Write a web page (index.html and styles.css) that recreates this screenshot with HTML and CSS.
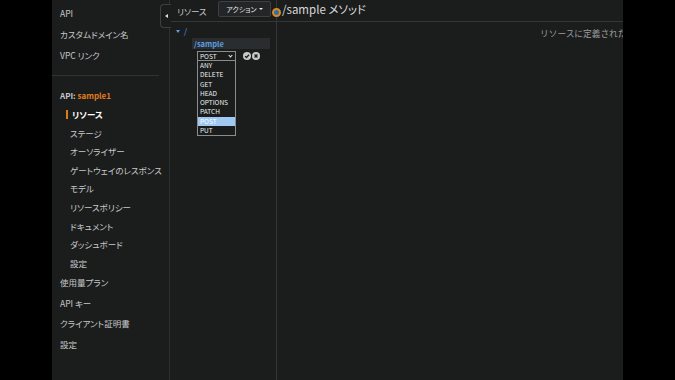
FILE: index.html
```html
<!DOCTYPE html>
<html lang="ja">

<head>
    <meta charset="UTF-8">
    <meta name="viewport" content="width=device-width, initial-scale=1.0">
    <title>API Gateway リソース</title>
    <link rel="stylesheet" href="styles.css">
</head>

<body>
    <div class="screen">
        <!-- 左のナビゲーション -->
        <ul class="nav">
            <li class="top">API</li>
            <li class="top">カスタムドメイン名</li>
            <li class="top">VPC リンク</li>
            <li class="divider"></li>
            <li class="api-name">API: <span>sample1</span></li>
            <li class="sub active">リソース</li>
            <li class="sub">ステージ</li>
            <li class="sub">オーソライザー</li>
            <li class="sub">ゲートウェイのレスポンス</li>
            <li class="sub">モデル</li>
            <li class="sub">リソースポリシー</li>
            <li class="sub">ドキュメント</li>
            <li class="sub">ダッシュボード</li>
            <li class="sub">設定</li>
            <li class="top2">使用量プラン</li>
            <li class="top2">API キー</li>
            <li class="top2">クライアント証明書</li>
            <li class="top2">設定</li>
        </ul>

        <div class="resources">
            <div class="collapse"><span></span></div>
            <div class="res-head">
                <span class="res-title">リソース</span>
                <button class="action">アクション<i></i></button>
            </div>
            <div class="tree">
                <div class="root"><i></i>/</div>
                <div class="node">/sample</div>
                <div class="method-row">
                    <div class="select">POST<i></i></div>
                    <span class="circle ok">
                        <svg viewBox="0 0 10 10" width="8" height="8"><path d="M2.6 5.2 L4.3 6.9 L7.5 3.4" fill="none" stroke="#1b1d1d" stroke-width="1.6"/></svg>
                    </span>
                    <span class="circle ng">
                        <svg viewBox="0 0 10 10" width="8" height="8"><path d="M3.2 3.2 L6.8 6.8 M6.8 3.2 L3.2 6.8" fill="none" stroke="#1b1d1d" stroke-width="1.6"/></svg>
                    </span>
                </div>
                <ul class="options">
                    <li>ANY</li>
                    <li>DELETE</li>
                    <li>GET</li>
                    <li>HEAD</li>
                    <li>OPTIONS</li>
                    <li>PATCH</li>
                    <li class="selected">POST</li>
                    <li>PUT</li>
                </ul>
            </div>
        </div>

        <div class="main">
            <span class="dot"></span>
            <div class="main-head">/sample メソッド</div>
            <div class="main-body">リソースに定義されたメソッドはありません。</div>
        </div>
    </div>
</body>

</html>
```

FILE: styles.css
```css
* {
    margin: 0;
    padding: 0;
    list-style-type: none;
    box-sizing: border-box;
}

body {
    background: #000;
    font-family: "Noto Sans CJK JP", "Noto Sans", sans-serif;
    font-feature-settings: "palt";
    color: #c8c8c8;
}

.screen {
    width: 571px;
    height: 380px;
    margin-left: 52px;
    background: #1b1d1d;
    display: flex;
    overflow: hidden;
}

/* ナビ */
.nav {
    width: 118px;
    flex-shrink: 0;
    padding-top: 2.5px;
    border-right: 1px solid #2c2e2f;
    font-size: 8.5px;
}

.nav li {
    padding-left: 8px;
    white-space: nowrap;
}

.nav .top {
    line-height: 21px;
}

.nav .divider {
    height: 1px;
    margin: 9.5px 10px 10.5px 0;
    background: #303233;
    padding: 0;
}

.nav .api-name {
    line-height: 18.6px;
    font-weight: bold;
    font-size: 8px;
}

.nav .api-name span {
    color: #e07b1a;
}

.nav .sub {
    line-height: 18.6px;
    padding-left: 18px;
}

.nav .sub.active {
    color: #fff;
    font-weight: bold;
    display: flex;
    align-items: center;
    padding-left: 14px;
}

.nav .sub.active::before {
    content: "";
    width: 2px;
    height: 9px;
    background: #e07b1a;
    margin-right: 4px;
}

.nav .top2 {
    line-height: 20.5px;
}

/* リソース */
.resources {
    width: 107px;
    flex-shrink: 0;
    border-right: 1px solid #34373a;
    position: relative;
}

.collapse {
    position: absolute;
    left: -10px;
    top: 4px;
    width: 11px;
    height: 24px;
    border: 1px solid #3c3f41;
    border-right: none;
    border-radius: 4px 0 0 4px;
    background: #1b1d1d;
    display: flex;
    align-items: center;
    justify-content: center;
}

.collapse span {
    width: 0;
    height: 0;
    border-top: 2.5px solid transparent;
    border-bottom: 2.5px solid transparent;
    border-right: 3px solid #e0e0e0;
}

.res-head {
    height: 22px;
    border-bottom: 1px solid #34373a;
    display: flex;
    align-items: center;
    padding-left: 6px;
    margin-left: 1px;
}

.res-title {
    font-size: 8.5px;
    color: #c8c8c8;
    width: 41px;
}

.action {
    height: 16px;
    width: 53px;
    margin-bottom: 3px;
    background: #232526;
    border: 1px solid #3d4042;
    border-radius: 2px;
    color: #e8e8e8;
    font-family: inherit;
    font-feature-settings: "palt";
    font-size: 7px;
    display: flex;
    align-items: center;
    justify-content: center;
}

.action i {
    width: 0;
    height: 0;
    margin-left: 2px;
    border-left: 2px solid transparent;
    border-right: 2px solid transparent;
    border-top: 2.5px solid #e8e8e8;
}

.tree {
    padding-top: 4px;
}

.root {
    color: #5c9ee0;
    font-size: 8px;
    line-height: 10px;
    padding-left: 6px;
    display: flex;
    align-items: center;
}

.root i {
    width: 0;
    height: 0;
    border-left: 2.5px solid transparent;
    border-right: 2.5px solid transparent;
    border-top: 3.5px solid #5c9ee0;
    margin-right: 4px;
}

.node {
    margin: 2px 6px 0 22px;
    height: 11px;
    background: #2a2d2f;
    color: #5c9ee0;
    font-weight: bold;
    font-size: 7.5px;
    line-height: 11px;
    padding-left: 2px;
}

.method-row {
    margin: 2px 0 0 27px;
    display: flex;
    align-items: center;
}

.select {
    width: 39px;
    height: 10px;
    border: 1px solid #8a8c8e;
    background: #1b1d1d;
    color: #f0f0f0;
    font-size: 6.5px;
    line-height: 8px;
    padding-left: 2px;
    display: flex;
    align-items: center;
    justify-content: space-between;
    padding-right: 3px;
}

.select i {
    width: 3px;
    height: 3px;
    border-right: 1px solid #f0f0f0;
    border-bottom: 1px solid #f0f0f0;
    transform: rotate(45deg);
    margin-top: -2px;
}

.circle {
    width: 8px;
    height: 8px;
    border-radius: 50%;
    background: #c8c8c8;
    display: flex;
    align-items: center;
    justify-content: center;
}

.circle.ok {
    margin-left: 7px;
}

.circle.ng {
    margin-left: 1px;
}

.options {
    margin-left: 27px;
    width: 39px;
    border: 1px solid #8a8c8e;
    border-top: none;
    background: #1b1d1d;
}

.options li {
    height: 9.3px;
    line-height: 9.3px;
    font-size: 6.5px;
    color: #f0f0f0;
    padding-left: 2px;
}

.options li.selected {
    background: #9fc9f3;
    color: #fff;
}

/* メイン */
.main {
    flex: 1;
    position: relative;
    min-width: 0;
}

.dot {
    position: absolute;
    left: -5px;
    top: 8px;
    width: 9px;
    height: 9px;
    border-radius: 50%;
    background: #2d6fb3;
    border: 2.5px solid #e08a1a;
}

.main-head {
    height: 22px;
    border-bottom: 1px solid #34373a;
    padding-left: 5px;
    font-size: 11.5px;
    line-height: 19px;
    color: #d8d8d8;
    white-space: nowrap;
}

.main-body {
    padding: 6px 0 0 263px;
    font-size: 8.7px;
    font-feature-settings: normal;
    line-height: 12px;
    color: #9a9c9e;
    white-space: nowrap;
}
```
